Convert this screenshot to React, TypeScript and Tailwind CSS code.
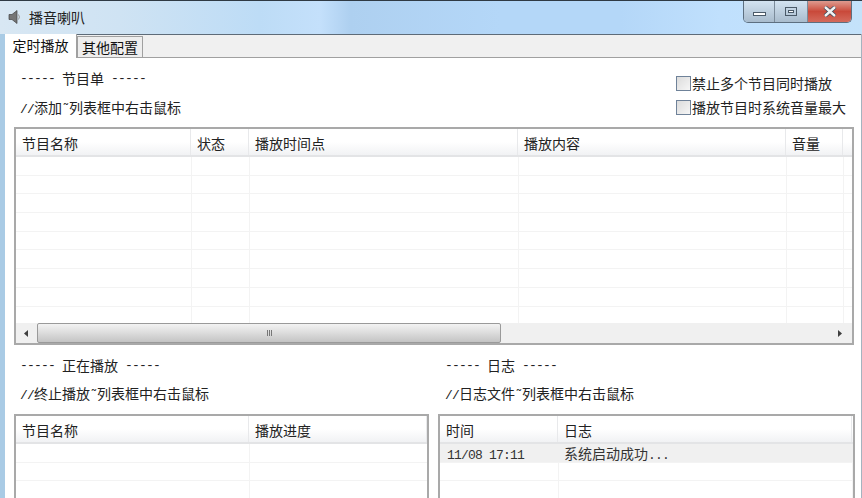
import React from 'react';

const FONT = "font-['Noto_Sans_CJK_SC','Liberation_Sans',sans-serif]";
const MONO = "font-['Liberation_Mono',monospace] text-[13px] tracking-[-0.8px]";

type Col = { label: string; width: number };

// half-width text, the ascii in the original sits on a 7px grid
const M: React.FC<{ children: React.ReactNode }> = ({ children }) => (
  <span className={`${MONO} whitespace-pre`}>{children}</span>
);

// "----- title -----" section heading
const Heading: React.FC<{ title: string }> = ({ title }) => (
  <div className="leading-[21px] flex items-center gap-[7px] whitespace-nowrap">
    <M>-----</M>
    <span>{title}</span>
    <M>-----</M>
  </div>
);

// list view with a grey frame, a 28px header and faint row lines
const ListView: React.FC<{
  cols: Col[];
  rows: number;
  cells?: string[];
  className?: string;
  children?: React.ReactNode;
}> = ({ cols, rows, cells, className = '', children }) => (
  <div className={`border-2 border-b-0 border-[#a9a9a9] bg-white overflow-hidden flex flex-col ${className}`}>
    <div className="flex h-[28px] shrink-0 border-b-2 border-[#e3e4e6] bg-gradient-to-b from-white via-white to-[#f1f2f4]">
      {cols.map(c => (
        <div
          key={c.label}
          className="shrink-0 h-full border-r border-[#e8e9eb] pl-[6px] text-[14px] leading-[28px] text-[#222] whitespace-nowrap"
          style={{ width: c.width }}
        >
          {c.label}
        </div>
      ))}
    </div>
    <div className="flex-1 overflow-hidden">
      {Array.from({ length: rows }).map((_, r) => (
        <div key={r} className={`flex h-[18.7px] border-b border-[#f3f3f3] ${r === 0 && cells ? 'bg-[#f0f0f0]' : ''}`}>
          {cols.map((c, i) => (
            <div
              key={c.label}
              className={`shrink-0 h-full border-r text-[14px] leading-[18px] text-[#333] whitespace-nowrap ${i === 0 ? 'pl-[7px]' : 'pl-[5px]'} ${r === 0 && cells ? 'border-transparent' : 'border-[#f3f3f3]'}`}
              style={{ width: i === 0 ? c.width + 1 : c.width }}
            >
              {r === 0 && cells ? (
                i === 0 ? <M>{cells[i]}</M> : <>{cells[i]}<M>...</M></>
              ) : null}
            </div>
          ))}
        </div>
      ))}
    </div>
    {children}
  </div>
);

const CheckRow: React.FC<{ label: string }> = ({ label }) => (
  <label className="flex items-center h-[24px] text-[14px] text-[#222] whitespace-nowrap">
    <span className="w-[15px] h-[15px] border border-[#6f8299] bg-gradient-to-br from-[#dcdcdc] to-[#f6f6f6] mr-px" />
    {label}
  </label>
);

const Arrow: React.FC<{ dir: 'left' | 'right' }> = ({ dir }) => (
  <svg width="5" height="7" viewBox="0 0 5 7">
    <path d={dir === 'left' ? 'M4 0V7L0 3.5Z' : 'M1 0V7L5 3.5Z'} fill="#3f3f3f" />
  </svg>
);

const ScrollBar = () => (
  <div className="flex items-stretch h-[20px] shrink-0 bg-[#f0f0f0] border-b-2 border-[#a9a9a9] box-content">
    <div className="w-[21px] flex items-center justify-center">
      <Arrow dir="left" />
    </div>
    <div className="w-[464px] rounded-[2px] border border-[#9a9a9a] bg-gradient-to-b from-[#f3f3f3] via-[#dcdcdc] to-[#c4c4c4] flex items-center justify-center">
      <div className="flex gap-px">
        <span className="w-px h-[6px] bg-[#777]" />
        <span className="w-px h-[6px] bg-[#777]" />
        <span className="w-px h-[6px] bg-[#777]" />
      </div>
    </div>
    <div className="flex-1 flex items-center justify-end pr-[10px]">
      <Arrow dir="right" />
    </div>
  </div>
);

export default function App() {
  return (
    <div className={`w-[862px] h-[498px] overflow-hidden flex flex-col bg-white ${FONT}`}>
      {/* title bar */}
      <div className="h-[34px] shrink-0 border-t border-[#2f3a44] bg-[linear-gradient(90deg,#d8e7f3_0px,#cfe3f3_120px,#bddcf6_260px,#c4e0fb_320px,#aed0f0_350px,#b4d7f8_500px,#b4d7f8_620px,#c0e0fd_720px,#c4e2fa_862px)] flex justify-between">
        <div className="flex items-center pl-[8px] pb-[2px]">
          <svg width="13" height="16" viewBox="0 0 13 16" className="mr-[8px]">
            <path d="M1 5.5H4L9 1.5V14.5L4 10.5H1Z" fill="#757575" stroke="#444" strokeWidth="0.7" />
            <path d="M10.5 5.5Q12.3 8 10.5 10.5" fill="none" stroke="#999" />
          </svg>
          <span className="text-[14px] text-[#222] leading-none">播音喇叭</span>
        </div>
        <div className="flex h-[22px] mr-[10px] border border-t-0 border-[#5d6f80] rounded-b-[5px] overflow-hidden">
          <div className="w-[31px] border-r border-[#7b8b9a] bg-gradient-to-b from-[#d3e3f1] to-[#a9bccd] flex items-center justify-center">
            <span className="w-[13px] h-[4px] mt-[5px] border border-[#4b5a68] bg-white" />
          </div>
          <div className="w-[33px] border-r border-[#7b8b9a] bg-gradient-to-b from-[#d3e3f1] to-[#a9bccd] flex items-center justify-center">
            <span className="w-[12px] h-[9px] border border-[#4b5a68] flex items-center justify-center">
              <span className="w-[6px] h-[3px] border border-[#4b5a68] bg-white" />
            </span>
          </div>
          <div className="w-[43px] bg-gradient-to-b from-[#dd9a8f] via-[#c9493a] to-[#d46a5c] flex items-center justify-center">
            <svg width="14" height="11" viewBox="0 0 14 11">
              <path d="M2 1L12 10M12 1L2 10" stroke="#3a4a5a" strokeWidth="4" />
              <path d="M2 1L12 10M12 1L2 10" stroke="#f2f2f2" strokeWidth="2.4" />
            </svg>
          </div>
        </div>
      </div>

      <div className="flex-1 min-h-0 flex flex-col border-l-[5px] border-l-[#a9cbe5] border-r border-r-[#a5b3bf] bg-white">
        {/* tab strip */}
        <div className="h-[24px] shrink-0 bg-[#f0f0f0] border-t border-t-[#5e6b78] border-b border-b-[#a0a0a0] flex items-end">
          <div className="w-[72px] h-[24px] bg-white border-r border-[#a0a0a0] -mb-px text-[14px] leading-[22px] text-center text-[#111] relative">定时播放</div>
          <div className="w-[66px] h-[21px] bg-[#eeeeee] border border-b-0 border-[#a0a0a0] text-[14px] leading-[20px] text-center text-[#111]">其他配置</div>
        </div>

        {/* top section */}
        <div className="flex justify-between pl-[15px] pr-[15px] h-[69px] shrink-0 text-[14px] text-[#222]">
          <div className="flex flex-col pt-[10px] gap-[8px]">
            <Heading title="节目单" />
            <div className="leading-[21px]"><M>//</M>添加<M>˜</M>列表框中右击鼠标</div>
          </div>
          <div className="flex flex-col pt-[13px]">
            <CheckRow label="禁止多个节目同时播放" />
            <CheckRow label="播放节目时系统音量最大" />
          </div>
        </div>

        <div className="pl-[9px] pr-[7px] flex flex-col">
          <ListView
            className="h-[218px]"
            rows={9}
            cols={[
              { label: '节目名称', width: 175 },
              { label: '状态', width: 58 },
              { label: '播放时间点', width: 269 },
              { label: '播放内容', width: 268 },
              { label: '音量', width: 57 },
            ]}
          >
            <ScrollBar />
          </ListView>
        </div>

        {/* bottom section */}
        <div className="flex gap-[9px] pl-[9px] pr-[7px] flex-1 min-h-0">
          <div className="w-[415px] shrink-0 flex flex-col">
            <div className="pl-[6px] pt-[10px] h-[69px] shrink-0 text-[14px] text-[#222]">
              <Heading title="正在播放" />
              <div className="leading-[21px] mt-[7px]"><M>//</M>终止播放<M>˜</M>列表框中右击鼠标</div>
            </div>
            <ListView
              className="flex-1"
              rows={3}
              cols={[
                { label: '节目名称', width: 233 },
                { label: '播放进度', width: 178 },
              ]}
            />
          </div>
          <div className="flex-1 flex flex-col">
            <div className="pl-[7px] pt-[10px] h-[69px] shrink-0 text-[14px] text-[#222]">
              <Heading title="日志" />
              <div className="leading-[21px] mt-[7px]"><M>//</M>日志文件<M>˜</M>列表框中右击鼠标</div>
            </div>
            <ListView
              className="flex-1"
              rows={3}
              cells={['11/08 17:11', '系统启动成功']}
              cols={[
                { label: '时间', width: 118 },
                { label: '日志', width: 294 },
              ]}
            />
          </div>
        </div>
      </div>
    </div>
  );
}
